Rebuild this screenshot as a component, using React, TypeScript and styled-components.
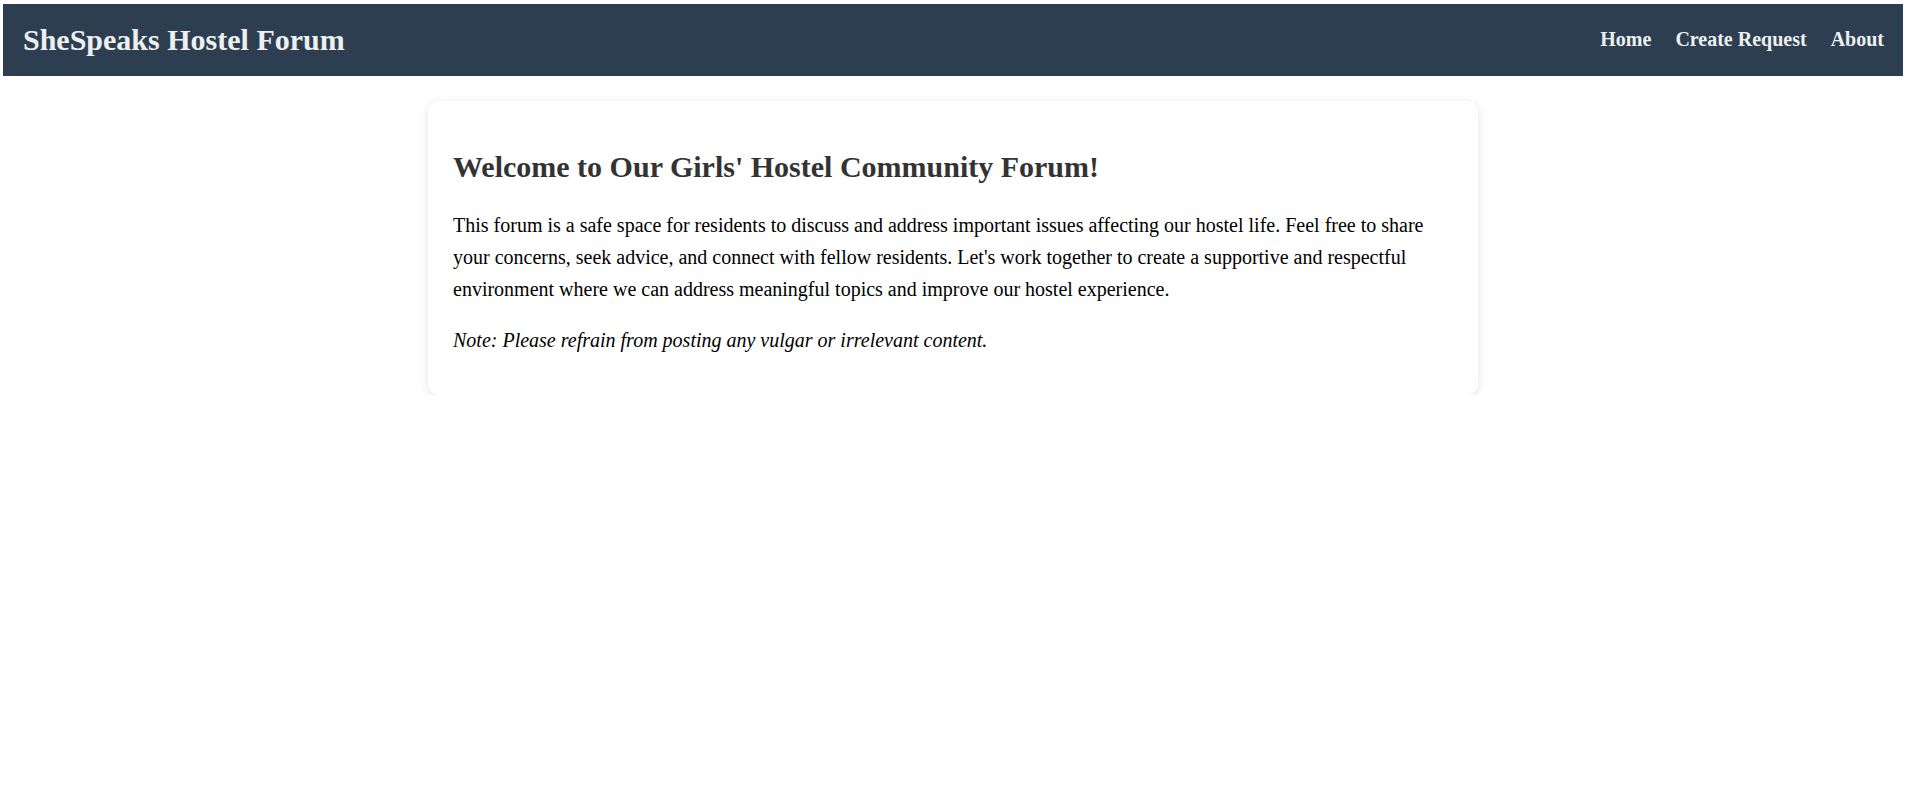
import styled, { createGlobalStyle } from "styled-components";

const GlobalStyle = createGlobalStyle`
    body {
        margin: 4px 7px 0 3px;
        background: #ffffff;
        font-family: "Liberation Serif", "Times New Roman", serif;
    }
`;

const NavBar = styled.nav`
    height: 71.5px;
    padding: 0 19px 0 20px;
    background: #2c3e50;
    color: #ecf0f1;
    display: flex;
    justify-content: space-between;
    align-items: center;

    h1 {
        margin: 0;
        font-size: 30px;
        font-weight: 700;
    }

    ul {
        list-style: none;
        margin: 0;
        padding: 0;
        display: flex;
        gap: 24px;
    }

    a {
        color: #ecf0f1;
        text-decoration: none;
        font-size: 20px;
        font-weight: 700;
    }
`;

const Main = styled.main`
    display: flex;
    justify-content: center;
    padding-top: 25.5px;
`;

const WelcomeCard = styled.section`
    width: 1050px;
    box-sizing: border-box;
    padding: 25px 25px 19px;
    background: #ffffff;
    border-radius: 11px;
    box-shadow: 0 2px 8px rgba(0, 0, 0, 0.12);

    h2 {
        margin: 24px 0 25px;
        font-size: 30px;
        font-weight: 700;
        color: #333333;
    }

    p {
        margin: 0 0 20px;
        font-size: 20px;
        line-height: 32px;
        color: #000000;
    }

    p.note {
        margin-top: -1px;
        font-style: italic;
    }
`;

const App: React.FC = () => {
    return (
        <>
            <GlobalStyle />
            <NavBar>
                <h1>SheSpeaks Hostel Forum</h1>
                <ul>
                    <li><a href="#">Home</a></li>
                    <li><a href="#">Create Request</a></li>
                    <li><a href="#">About</a></li>
                </ul>
            </NavBar>
            <Main>
                <WelcomeCard>
                    <h2>Welcome to Our Girls' Hostel Community Forum!</h2>
                    <p>
                        This forum is a safe space for residents to discuss and address important issues
                        affecting our hostel life. Feel free to share your concerns, seek advice, and connect
                        with fellow residents. Let's work together to create a supportive and respectful
                        environment where we can address meaningful topics and improve our hostel experience.
                    </p>
                    <p className="note">Note: Please refrain from posting any vulgar or irrelevant content.</p>
                </WelcomeCard>
            </Main>
        </>
    );
};

export default App;
